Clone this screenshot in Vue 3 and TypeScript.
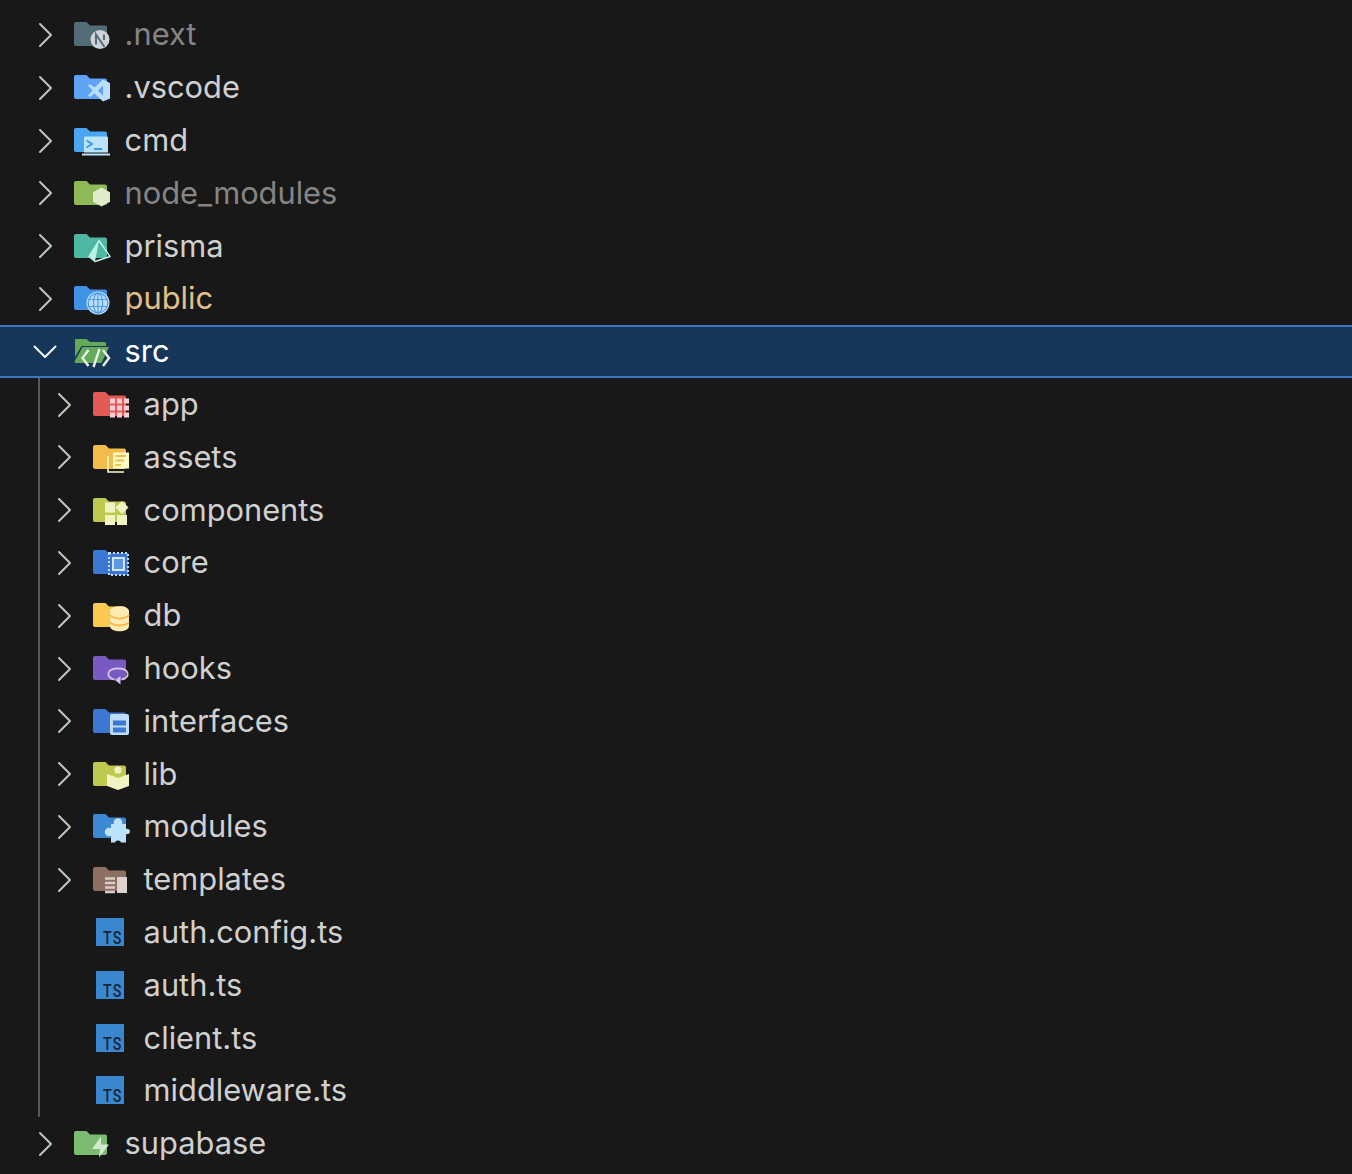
<script setup lang="ts">
interface Row { name: string; icon: string; color: string; depth?: number; tone?: string; chevron?: string }
const folderPath = 'M4 8H14.5L18 11.5H33A2 2 0 0 1 35 13.5V30A2 2 0 0 1 33 32H4A2 2 0 0 1 2 30V10A2 2 0 0 1 4 8Z'
const rows: Row[] = [
  { name: '.next', icon: 'next', color: '#546b78', tone: 'dim' },
  { name: '.vscode', icon: 'vscode', color: '#5ea3f6' },
  { name: 'cmd', icon: 'cmd', color: '#4ba6f2' },
  { name: 'node_modules', icon: 'node', color: '#8fb957', tone: 'dim' },
  { name: 'prisma', icon: 'prisma', color: '#4fb8a5' },
  { name: 'public', icon: 'public', color: '#3f92e4', tone: 'ignored' },
  { name: 'src', icon: 'src', color: '#65a95b', tone: 'active', chevron: 'down' },
  { name: 'app', icon: 'app', color: '#e25a58', depth: 1 },
  { name: 'assets', icon: 'assets', color: '#f2bb4c', depth: 1 },
  { name: 'components', icon: 'components', color: '#c0c94f', depth: 1 },
  { name: 'core', icon: 'core', color: '#3c77d4', depth: 1 },
  { name: 'db', icon: 'db', color: '#fbc94f', depth: 1 },
  { name: 'hooks', icon: 'hooks', color: '#7a59c0', depth: 1 },
  { name: 'interfaces', icon: 'interfaces', color: '#3c77d4', depth: 1 },
  { name: 'lib', icon: 'lib', color: '#c0c94f', depth: 1 },
  { name: 'modules', icon: 'modules', color: '#3d88d4', depth: 1 },
  { name: 'templates', icon: 'templates', color: '#8d6f64', depth: 1 },
  { name: 'auth.config.ts', icon: 'ts', color: '', depth: 1, chevron: 'none' },
  { name: 'auth.ts', icon: 'ts', color: '', depth: 1, chevron: 'none' },
  { name: 'client.ts', icon: 'ts', color: '', depth: 1, chevron: 'none' },
  { name: 'middleware.ts', icon: 'ts', color: '', depth: 1, chevron: 'none' },
  { name: 'supabase', icon: 'supabase', color: '#7dba72' },
]
</script>

<template>
  <div class="tree">
    <div
      v-for="row in rows"
      :key="row.name"
      class="row"
      :class="[row.tone, { nested: row.depth === 1 }]"
    >
      <svg class="chevron" viewBox="0 0 24 24" fill="none" stroke-linecap="round" stroke-linejoin="round">
        <path v-if="row.chevron === 'down'" d="M1.5 6.5L12 17L22.5 6.5" stroke="#f2f5f8" stroke-width="2" />
        <path v-else-if="row.chevron !== 'none'" d="M7 1L18 12L7 23" stroke="#c2c2c2" stroke-width="2" />
      </svg>
      <svg class="icon" viewBox="0 0 40 40">
        <path v-if="row.icon !== 'ts' && row.icon !== 'src'" :d="folderPath" :fill="row.color" />

        <template v-if="row.icon === 'next'">
          <circle cx="28" cy="25.5" r="9.5" fill="#cdd3d6" />
          <path d="M24 30.5V20.5L32.5 33M32 20.5V26" stroke="#546b78" stroke-width="2" fill="none" />
        </template>
        <path v-else-if="row.icon === 'vscode'" fill-rule="evenodd" fill="#bbdefb" d="M31 12.5L38 16V31.5L31 34.5L22.5 26.5L18 30L16 28.5L20.5 23.5L16 18.5L18 17L22.5 20.5ZM31 18.5L26 23.5L31 28.5Z" />
        <template v-else-if="row.icon === 'cmd'">
          <path d="M13 16.5H35A1 1 0 0 1 36 17.5V32.5H12V17.5A1 1 0 0 1 13 16.5Z" fill="#bbe3fb" />
          <rect x="10" y="33.5" width="28" height="2" fill="#bbe3fb" />
          <path d="M14.5 20.5L20 24L14.5 27.5M22 29H30" stroke="#3a9be8" stroke-width="2" fill="none" />
        </template>
        <path v-else-if="row.icon === 'node'" d="M29.5 14.5L38 19.2V28.8L29.5 33.5L21 28.8V19.2Z" fill="#e0ebc9" />
        <template v-else-if="row.icon === 'prisma'">
          <path d="M27 14.5L38 30.5L23 35.5L17 30.5Z" fill="none" stroke="#c8f4ea" stroke-width="1.4" stroke-linejoin="round" />
          <path d="M27 14.5L23 35.5L17 30.5Z" fill="#b9f3e6" />
        </template>
        <template v-else-if="row.icon === 'public'">
          <circle cx="26" cy="25" r="11.5" fill="#bbdefb" />
          <g fill="none" stroke="#4d9be8" stroke-width="1.2">
            <circle cx="26" cy="25" r="9.8" />
            <ellipse cx="26" cy="25" rx="4.6" ry="9.8" />
            <path d="M26 15V35M17 21.5H35M17 28.5H35" />
          </g>
        </template>
        <template v-else-if="row.icon === 'src'">
          <path d="M3.5 8H14.5L18 11H32.5A1.5 1.5 0 0 1 34 12.5V15H9.5L3 26V9.5A1.5 1.5 0 0 1 3.5 8Z" :fill="row.color" />
          <path d="M10.5 16H37L30 31A1.5 1.5 0 0 1 29 32H3.5A1.5 1.5 0 0 1 2.5 30.5Z" :fill="row.color" />
          <path d="M16.5 19L10.5 27L16.5 35M31 19L37 27L31 35M27.5 18L21.5 36" stroke="#e6f4e0" stroke-width="2.4" fill="none" />
        </template>
        <g v-else-if="row.icon === 'app'" fill="#ffcdd2">
          <rect v-for="c in 9" :key="c" :x="19 + ((c - 1) % 3) * 7" :y="14.5 + Math.floor((c - 1) / 3) * 7" width="5" height="5" />
        </g>
        <template v-else-if="row.icon === 'assets'">
          <rect x="22" y="15.5" width="16" height="16" fill="#fff9c4" />
          <path d="M24.5 19H35M24.5 23.5H33M24.5 28H30" stroke="#f2bb4c" stroke-width="2" />
          <path d="M17 19V35H33" fill="none" stroke="#fff9c4" stroke-width="1.6" />
        </template>
        <g v-else-if="row.icon === 'components'" fill="#f0f4c3">
          <rect x="14" y="12.5" width="10" height="10" />
          <path d="M31 11L37.5 17.5L31 24L24.5 17.5Z" />
          <rect x="14" y="25" width="10" height="10" />
          <rect x="26" y="25" width="10" height="10" />
        </g>
        <template v-else-if="row.icon === 'core'">
          <rect x="18" y="11" width="19" height="22" fill="#3c77d4" stroke="#bbdefb" stroke-width="2" stroke-dasharray="2 2" />
          <rect x="22" y="16" width="11" height="12" fill="#5e97e4" stroke="#cfe6fb" stroke-width="2" />
        </template>
        <template v-else-if="row.icon === 'db'">
          <path d="M19 16C19 9.5 38 9.5 38 16V31C38 38 19 38 19 31Z" fill="#ffecb3" />
          <path d="M19 20C22 24.5 35 24.5 38 20M19 27C22 31.5 35 31.5 38 27" fill="none" stroke="#f2bb4c" stroke-width="2" />
        </template>
        <template v-else-if="row.icon === 'hooks'">
          <path d="M23.5 31.5C14.5 30 15 20.5 27 20.5C39 20.5 39.5 30 30.5 31.5" fill="none" stroke="#d1c4e9" stroke-width="1.8" />
          <path d="M29.5 28V36.5L24 32Z" fill="#d1c4e9" />
        </template>
        <template v-else-if="row.icon === 'interfaces'">
          <rect x="19" y="13" width="19" height="21" rx="2" fill="#bfdcfa" />
          <rect x="22" y="19.5" width="13" height="5" fill="#3c77d4" />
          <rect x="22" y="26.5" width="13" height="5" fill="#3c77d4" />
        </template>
        <g v-else-if="row.icon === 'lib'" fill="#f0f4c3">
          <circle cx="27" cy="16" r="3.6" />
          <path d="M16 20L27 24L38 20V32L27 36L16 32Z" />
        </g>
        <g v-else-if="row.icon === 'modules'">
          <g fill="#bbe3fb">
            <path d="M20 18H35V36.5H20Z" />
            <circle cx="27" cy="16.5" r="4.3" />
            <circle cx="36" cy="25.5" r="2.8" />
            <circle cx="18" cy="26" r="4.2" />
          </g>
          <circle cx="27" cy="37.5" r="3" fill="#181818" />
        </g>
        <g v-else-if="row.icon === 'templates'">
          <path d="M14 19.5H24M14 24H24M14 28.5H24M14 33H24" stroke="#d7ccc8" stroke-width="2.4" />
          <rect x="26" y="18" width="10" height="16" fill="#dcd3cf" />
        </g>
        <template v-else-if="row.icon === 'ts'">
          <rect x="5" y="6" width="28" height="28" fill="#3a86cf" />
          <text x="12" y="32" class="ts-label" textLength="19.5" lengthAdjust="spacingAndGlyphs">TS</text>
        </template>
        <path v-else-if="row.icon === 'supabase'" d="M29 13.5L20 26H28L27 34.5L37 21.5H29Z" fill="#d0ebd0" />
      </svg>
      <span class="label">{{ row.name }}</span>
    </div>
  </div>
</template>

<style scoped>
.tree {
  width: 1352px;
  height: 1174px;
  box-sizing: border-box;
  padding-top: 8.6px;
  background: #181818;
  overflow: hidden;
  font-family: Inter, "Noto Sans", sans-serif;
}
.row {
  display: flex;
  align-items: center;
  height: 52.8px;
  box-sizing: border-box;
  padding-left: 33px;
}
.row.nested {
  margin-left: 38px;
  padding-left: 12px;
  border-left: 2px solid #585858;
}
.row.active {
  background: #17375a;
  border-top: 2px solid #3a76c4;
  border-bottom: 2px solid #3a76c4;
}
.chevron {
  width: 24px;
  height: 24px;
  flex: none;
  overflow: visible;
}
.icon {
  width: 40px;
  height: 40px;
  flex: none;
  margin-left: 15px;
  margin-bottom: 1.2px;
  overflow: visible;
}
.label {
  margin-left: 12.6px;
  padding-bottom: 2px;
  font-size: 30.8px;
  color: #d0d0d0;
  white-space: nowrap;
}
.dim .label { color: #858585; }
.ignored .label { color: #e2c08d; }
.active .label { color: #ffffff; }
.ts-label {
  font-family: Roboto, sans-serif;
  font-size: 19px;
  font-weight: 500;
  letter-spacing: 1.5px;
  fill: #16263a;
}
</style>
